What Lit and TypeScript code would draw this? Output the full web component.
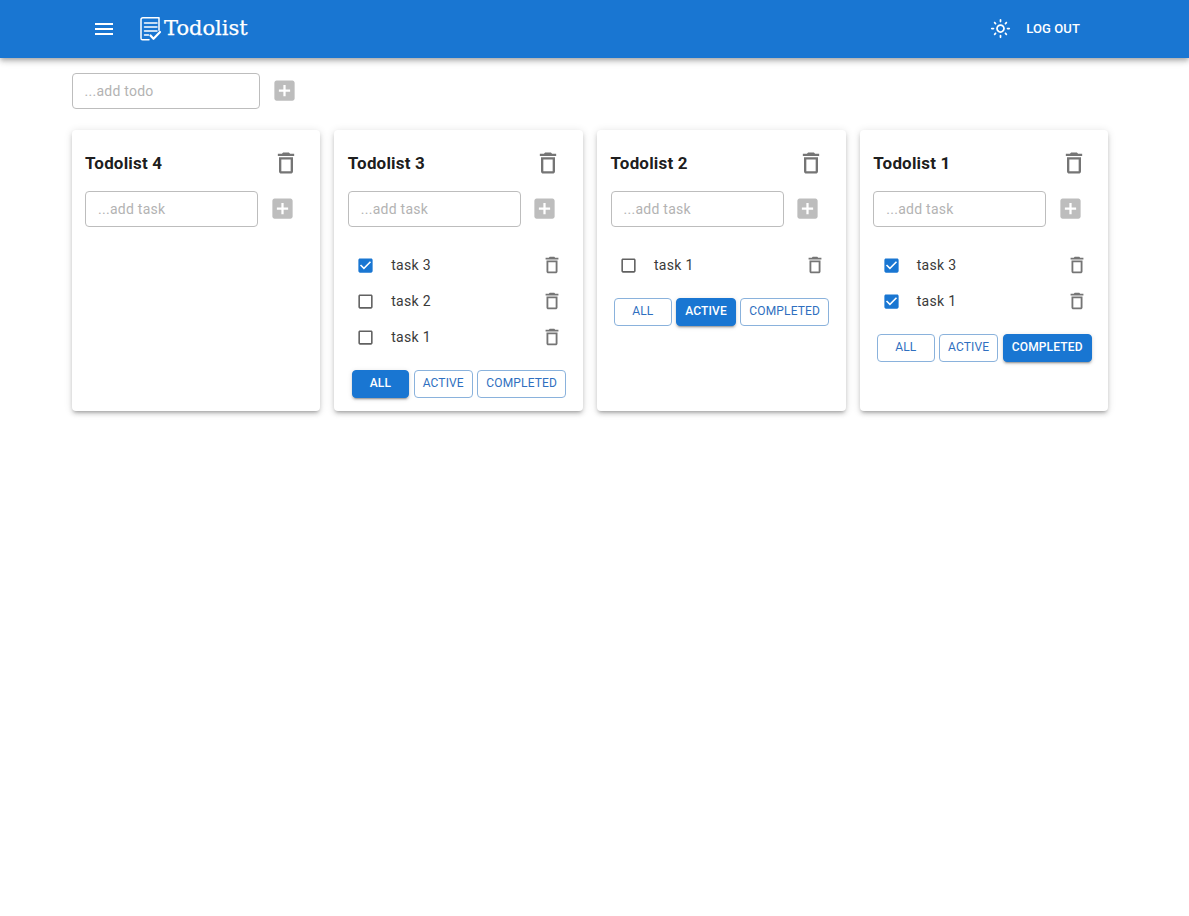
import { LitElement, html, css, svg } from "lit";
import { customElement } from "lit/decorators.js";

const P = {
  menu: "M3 18h18v-2H3v2zm0-5h18v-2H3v2zm0-7v2h18V6H3z",
  sun: "M12 9c1.65 0 3 1.35 3 3s-1.35 3-3 3-3-1.35-3-3 1.35-3 3-3m0-2c-2.76 0-5 2.24-5 5s2.24 5 5 5 5-2.24 5-5-2.24-5-5-5zM2 13h2c.55 0 1-.45 1-1s-.45-1-1-1H2c-.55 0-1 .45-1 1s.45 1 1 1zm18 0h2c.55 0 1-.45 1-1s-.45-1-1-1h-2c-.55 0-1 .45-1 1s.45 1 1 1zM11 2v2c0 .55.45 1 1 1s1-.45 1-1V2c0-.55-.45-1-1-1s-1 .45-1 1zm0 18v2c0 .55.45 1 1 1s1-.45 1-1v-2c0-.55-.45-1-1-1s-1 .45-1 1zM5.99 4.58c-.39-.39-1.03-.39-1.41 0-.39.39-.39 1.03 0 1.41l1.06 1.06c.39.39 1.03.39 1.41 0s.39-1.03 0-1.41L5.99 4.58zm12.37 12.37c-.39-.39-1.03-.39-1.41 0-.39.39-.39 1.03 0 1.41l1.06 1.06c.39.39 1.03.39 1.41 0 .39-.39.39-1.03 0-1.41l-1.06-1.06zm1.06-10.96c.39-.39.39-1.03 0-1.41-.39-.39-1.03-.39-1.41 0l-1.06 1.06c-.39.39-.39 1.03 0 1.41s1.03.39 1.41 0l1.06-1.06zM7.05 18.36c.39-.39.39-1.03 0-1.41-.39-.39-1.03-.39-1.41 0l-1.06 1.06c-.39.39-.39 1.03 0 1.41s1.03.39 1.41 0l1.06-1.06z",
  add: "M19 3H5c-1.11 0-2 .9-2 2v14c0 1.1.89 2 2 2h14c1.1 0 2-.9 2-2V5c0-1.1-.9-2-2-2zm-2 10h-4v4h-2v-4H7v-2h4V7h2v4h4v2z",
  trash: "M6 19c0 1.1.9 2 2 2h8c1.1 0 2-.9 2-2V7H6v12zM8 9h8v10H8V9zm7.5-5l-1-1h-5l-1 1H5v2h14V4z",
  on: "M19 3H5c-1.11 0-2 .9-2 2v14c0 1.1.89 2 2 2h14c1.11 0 2-.9 2-2V5c0-1.1-.89-2-2-2zm-9 14l-5-5 1.41-1.41L10 14.17l7.59-7.59L19 8l-9 9z",
  off: "M19 5v14H5V5h14m0-2H5c-1.1 0-2 .9-2 2v14c0 1.1.9 2 2 2h14c1.1 0 2-.9 2-2V5c0-1.1-.9-2-2-2z",
};

const icon = (d: string, size: number, cls = "") =>
  html`<svg class=${cls} width=${size} height=${size} viewBox="0 0 24 24" fill="currentColor"><path d=${d}></path></svg>`;

type Task = { title: string; done: boolean };
type List = { title: string; filter: string; tasks: Task[] };

const LISTS: List[] = [
  { title: "Todolist 4", filter: "all", tasks: [] },
  { title: "Todolist 3", filter: "all", tasks: [
    { title: "task 3", done: true },
    { title: "task 2", done: false },
    { title: "task 1", done: false },
  ] },
  { title: "Todolist 2", filter: "active", tasks: [{ title: "task 1", done: false }] },
  { title: "Todolist 1", filter: "completed", tasks: [
    { title: "task 3", done: true },
    { title: "task 1", done: true },
  ] },
];

@customElement("app-root")
export class AppRoot extends LitElement {
  static styles = css`
    :host { display: block; font-family: Roboto, "Liberation Sans", sans-serif; color: rgba(0,0,0,.87); background: #fff; min-height: 916px; }
    * { box-sizing: border-box; }
    .bar { height: 58px; background: #1976d2; color: #fff; display: flex; align-items: center; padding: 0 109px 0 92px; box-shadow: 0 2px 4px -1px rgba(0,0,0,.2), 0 4px 5px 0 rgba(0,0,0,.14), 0 1px 10px 0 rgba(0,0,0,.12); }
    .bar svg { display: block; }
    .logo { margin-left: 23px; }
    .brand { font-family: "DejaVu Serif", serif; font-size: 21px; margin-left: 1px; margin-bottom: 2px; line-height: 24px; -webkit-text-stroke: 0.25px #fff; }
    .spacer { flex: 1; }
    .sun { margin-bottom: 1px; }
    .logout { font-size: 13px; font-weight: 500; margin-left: 15px; margin-bottom: 2px; letter-spacing: 0.1px; }
    .main { padding: 15px 0 0 71.6px; }
    .add { display: flex; align-items: center; }
    .add input { width: 188px; height: 36px; border: 1px solid #bdbdbd; border-radius: 4px; padding: 0 12px; font: 400 14px Roboto, sans-serif; letter-spacing: 0.25px; outline: none; background: #fff; }
    .add input::placeholder { color: #b3b3b3; opacity: 1; }
    .add button { width: 40px; height: 36px; margin-left: 5px; border: 0; padding: 0 0 1px; background: none; color: #bdbdbd; display: flex; align-items: center; justify-content: center; }
    .grid { display: grid; grid-template-columns: repeat(4, 248.5px); column-gap: 14.25px; margin-top: 21px; }
    .card { background: #fff; border-radius: 4px; padding: 13px 13px 13px 13.5px; box-shadow: 0 3px 3px -2px rgba(0,0,0,.2), 0 3px 4px 0 rgba(0,0,0,.14), 0 1px 8px 0 rgba(0,0,0,.12); }
    .head { display: flex; align-items: center; justify-content: space-between; height: 40px; margin-bottom: 8px; }
    h3 { margin: 0; font-size: 17px; font-weight: 700; line-height: 24px; color: rgba(0,0,0,.9); letter-spacing: 0.17px; }
    .icon-btn { border: 0; padding: 0; background: none; color: #757575; display: flex; align-items: center; justify-content: center; }
    .head .icon-btn { width: 40px; height: 40px; margin-right: 1.5px; }
    .card .add input { width: 173px; }
    .card .add button { margin-left: 4px; }
    .tasks { list-style: none; margin: 20px 0 15px; padding: 0; }
    .task { display: flex; align-items: center; height: 36px; }
    .check { width: 36px; height: 36px; display: flex; align-items: center; justify-content: center; color: #616161; flex: none; }
    .check.done { color: #1976d2; }
    .name { flex: 1; margin-left: 7.4px; font-size: 14px; letter-spacing: 0.3px; color: #3a3a3a; }
    .task .icon-btn { width: 34px; height: 36px; margin-right: 1px; }
    .filters { display: flex; justify-content: center; gap: 4.5px; }
    .filters button { height: 28px; min-width: 57.5px; padding: 0 8px 2px; border-radius: 4px; font: 400 12px Roboto, sans-serif; letter-spacing: 0.15px; text-transform: uppercase; background: #fff; color: #2f6fc0; border: 1px solid #8ab2dc; }
    .filters button.active { background: #1976d2; color: #fff; border-color: #1976d2; font-weight: 500; box-shadow: 0 3px 1px -2px rgba(0,0,0,.2), 0 2px 2px 0 rgba(0,0,0,.14), 0 1px 5px 0 rgba(0,0,0,.12); }
  `;

  private renderLogo() {
    return html`<svg class="logo" width="24" height="26" viewBox="0 0 24 26" fill="none" stroke="currentColor" stroke-width="1.5" stroke-linecap="round" stroke-linejoin="round">
      ${svg`<path d="M4 1.8h16v12.5M4 1.8c-1.3 0-2 .8-2 2v18.4c0 1 .6 1.6 1.5 1.6h6.5"></path>
      <path d="M5.5 7h12.5M5.5 11h12.5M5.5 15h12.5M5.5 19h4"></path>
      <path d="M11.5 19.5l3 3.3 6.5-6.8" stroke-width="2.2"></path>`}
    </svg>`;
  }

  render() {
    return html`
      <header class="bar">
        ${icon(P.menu, 24)}
        ${this.renderLogo()}
        <span class="brand">Todolist</span>
        <span class="spacer"></span>
        ${icon(P.sun, 21, "sun")}
        <span class="logout">LOG OUT</span>
      </header>
      <main class="main">
        <div class="add">
          <input placeholder="...add todo" />
          <button aria-label="add">${icon(P.add, 27)}</button>
        </div>
        <section class="grid">
          ${LISTS.map((l) => html`
            <article class="card">
              <div class="head">
                <h3>${l.title}</h3>
                <button class="icon-btn" aria-label="delete">${icon(P.trash, 28)}</button>
              </div>
              <div class="add">
                <input placeholder="...add task" />
                <button aria-label="add">${icon(P.add, 27)}</button>
              </div>
              ${l.tasks.length ? html`
                <ul class="tasks">
                  ${l.tasks.map((t) => html`
                    <li class="task">
                      <span class="check ${t.done ? "done" : ""}">${icon(t.done ? P.on : P.off, 19)}</span>
                      <span class="name">${t.title}</span>
                      <button class="icon-btn" aria-label="delete">${icon(P.trash, 22)}</button>
                    </li>`)}
                </ul>
                <div class="filters">
                  ${["all", "active", "completed"].map((f) => html`<button class=${l.filter === f ? "active" : ""}>${f}</button>`)}
                </div>` : ""}
            </article>`)}
        </section>
      </main>
    `;
  }
}
